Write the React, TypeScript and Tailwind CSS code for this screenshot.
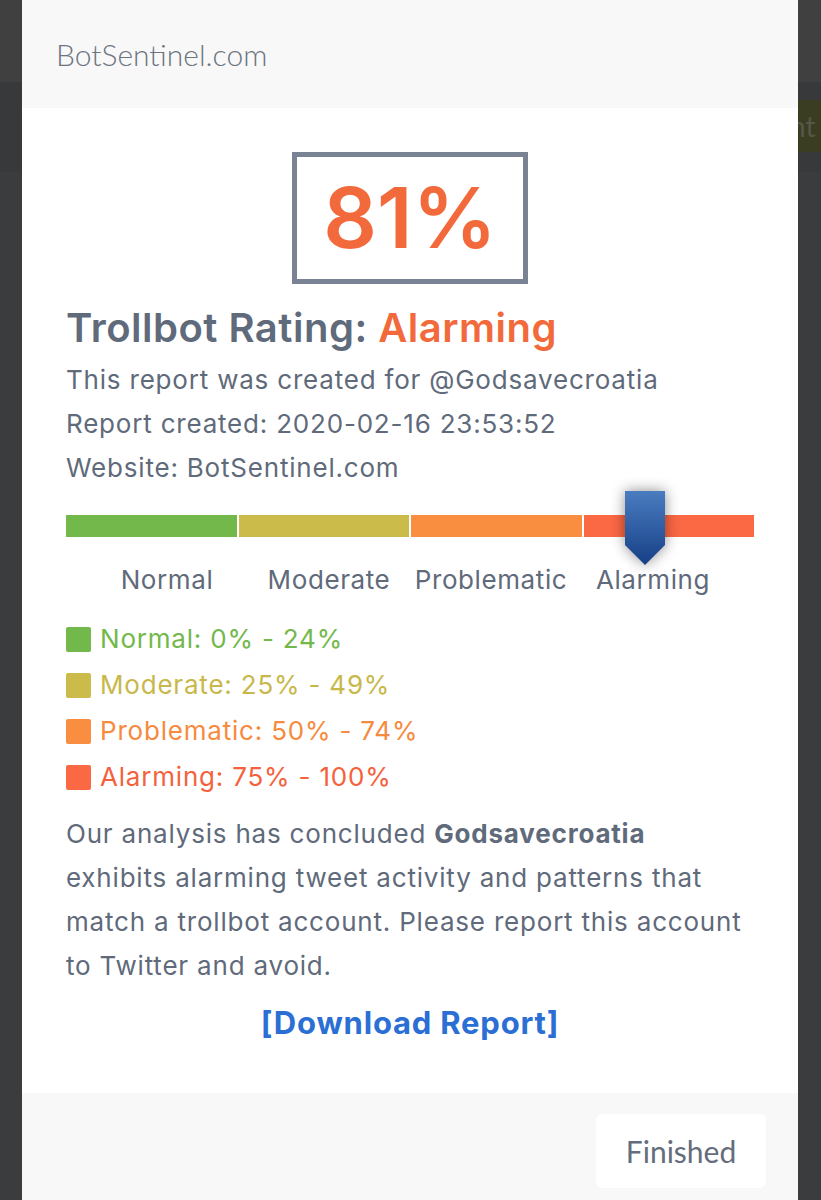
const gray = "text-[#5f6a7b]";

const segments = [
  { label: "Normal", range: "0% - 24%", bar: "bg-[#72b84a]", text: "text-[#72b84a]" },
  { label: "Moderate", range: "25% - 49%", bar: "bg-[#cbbb4a]", text: "text-[#c8b84a]" },
  { label: "Problematic", range: "50% - 74%", bar: "bg-[#f98e40]", text: "text-[#f68a3e]" },
  { label: "Alarming", range: "75% - 100%", bar: "bg-[#fb6844]", text: "text-[#f4623d]" },
];

function Marker() {
  return (
    <svg
      width="40"
      height="75"
      viewBox="0 0 40 75"
      className="absolute left-[559px] top-[-24px] [filter:drop-shadow(0_0_7px_rgba(0,0,0,0.45))]"
    >
      <defs>
        <linearGradient id="mk" x1="0" y1="0" x2="0" y2="1">
          <stop offset="0" stopColor="#4a7cc0" />
          <stop offset="1" stopColor="#163f86" />
        </linearGradient>
      </defs>
      <polygon points="0,0 40,0 40,54 20,74 0,54" fill="url(#mk)" />
    </svg>
  );
}

export default function App() {
  return (
    <div className="flex min-h-[1200px] w-[821px] bg-[#3b3c3e] font-['Inter',sans-serif]">
      <div className="flex w-[22px] flex-col">
        <div className="h-[82px] bg-[#404041]" />
        <div className="h-[90px] bg-[#38393b]" />
      </div>

      <div className="flex w-[776px] flex-col">
        <header className="flex h-[108px] items-center bg-[#f8f8f8] px-[34px]">
          <span className="font-['Lato',sans-serif] text-[30px] font-light text-[#6c7480]">
            BotSentinel.com
          </span>
        </header>

        <main className={`flex-1 bg-white px-[44px] pt-[44px] pb-[40px] ${gray}`}>
          <div className="mx-auto flex h-[132px] w-[236px] items-center justify-center border-[5px] border-[#7a8394]">
            <span className="text-[84px] leading-none font-semibold text-[#f26a3b]">81%</span>
          </div>

          <h1 className="mt-[20px] text-[40px] leading-[48px] font-semibold tracking-[0.5px]">
            Trollbot Rating: <span className="text-[#f26a3b]">Alarming</span>
          </h1>

          <div className="mt-[6px] text-[26px] leading-[44px] tracking-[0.8px]">
            <p>This report was created for @Godsavecroatia</p>
            <p>Report created: 2020-02-16 23:53:52</p>
            <p>Website: BotSentinel.com</p>
          </div>

          <div className="relative mt-[25px] flex h-[22px] gap-[2px]">
            {segments.map((s) => (
              <div key={s.label} className={`flex-1 ${s.bar}`} />
            ))}
            <Marker />
          </div>

          <div className="mt-[26px] grid grid-cols-[162px_162px_162px_162px] pl-[20px] text-[26px] leading-[34px] tracking-[0.6px]">
            {segments.map((s) => (
              <span key={s.label} className="text-center whitespace-nowrap">
                {s.label}
              </span>
            ))}
          </div>

          <ul className="mt-[25px] flex flex-col gap-[12px]">
            {segments.map((s) => (
              <li
                key={s.label}
                className={`flex items-center gap-[9px] text-[26px] leading-[34px] tracking-[0.8px] ${s.text}`}
              >
                <span className={`h-[25px] w-[25px] rounded-[2px] ${s.bar}`} />
                {s.label}: {s.range}
              </li>
            ))}
          </ul>

          <p className="mt-[18px] text-[26px] leading-[44px] tracking-[0.8px] whitespace-nowrap">
            Our analysis has concluded <b className="font-bold">Godsavecroatia</b>
            <br />
            exhibits alarming tweet activity and patterns that
            <br />
            match a trollbot account. Please report this account
            <br />
            to Twitter and avoid.
          </p>

          <div className="mt-[15px] text-center">
            <a className="text-[31px] leading-[40px] font-bold tracking-[0.8px] text-[#2b6fd5]">[Download Report]</a>
          </div>
        </main>

        <footer className="flex h-[107px] items-start justify-end bg-[#f8f8f8] px-[32px] pt-[21px]">
          <button className="h-[74px] w-[170px] rounded-[6px] bg-white font-['Lato',sans-serif] text-[30px] text-[#636d7b]">
            Finished
          </button>
        </footer>
      </div>

      <div className="flex w-[23px] flex-col">
        <div className="h-[82px] bg-[#404041]" />
        <div className="h-[18px] bg-[#38393b]" />
        <div className="flex h-[52px] items-center overflow-hidden bg-[#3b3d22] font-['Lato',sans-serif] text-[28px] text-[#555747]">
          <span className="-ml-[8px]">nt</span>
        </div>
        <div className="h-[20px] bg-[#38393b]" />
      </div>
    </div>
  );
}
